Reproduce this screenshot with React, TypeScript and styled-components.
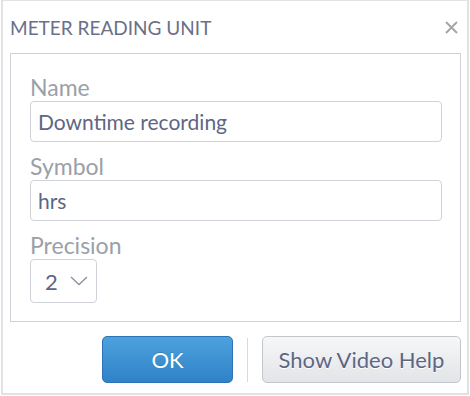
import React from 'react';
import styled, { createGlobalStyle } from 'styled-components';

const GlobalStyle = createGlobalStyle`
  html, body {
    margin: 0;
    padding: 0;
    background: #ffffff;
  }
  body {
    font-family: Lato, "Open Sans", "Liberation Sans", sans-serif;
  }
`;

const Dialog = styled.div`
  box-sizing: border-box;
  margin-left: 1px;
  width: 468px;
  height: 395px;
  border: 2px solid #e2e2e2;
  border-top-width: 1px;
  background: #fff;
  display: flex;
  flex-direction: column;
`;

const Header = styled.div`
  display: flex;
  align-items: center;
  justify-content: space-between;
  height: 52px;
  padding: 0 6px 0 7px;
`;

const Title = styled.h2`
  margin: 0;
  font-size: 19px;
  font-weight: 400;
  color: #6a7089;
`;

const CloseButton = styled.button`
  border: none;
  background: none;
  padding: 0;
  width: 20px;
  height: 20px;
  display: flex;
  align-items: center;
  justify-content: center;
  cursor: pointer;
`;

const FieldSet = styled.div`
  box-sizing: border-box;
  margin: 0 6px 0 7px;
  height: 269px;
  border: 1px solid #cdd1d8;
  padding: 20px 19px 0 19px;
  display: flex;
  flex-direction: column;
`;

const Field = styled.div`
  display: flex;
  flex-direction: column;
  margin-bottom: 11px;
`;

const Label = styled.label`
  font-size: 23px;
  line-height: 27px;
  color: #9aa0a8;
`;

const TextInput = styled.input`
  box-sizing: border-box;
  width: 412px;
  height: 41px;
  border: 1px solid #cfd3d9;
  border-radius: 4px;
  padding: 0 7px;
  font-family: inherit;
  font-size: 21px;
  color: #5d6684;
  outline: none;
`;

const Select = styled.div`
  box-sizing: border-box;
  width: 67px;
  height: 44px;
  border: 1px solid #cfd3d9;
  border-radius: 4px;
  display: flex;
  align-items: center;
  gap: 12px;
  padding-left: 14px;
  font-size: 22px;
  color: #5d6684;
`;

const Footer = styled.div`
  display: flex;
  justify-content: flex-end;
  align-items: center;
  gap: 14px;
  padding: 14px 6px 0 0;
`;

const Button = styled.button<{ $primary?: boolean }>`
  box-sizing: border-box;
  height: 47px;
  border-radius: 5px;
  font-family: inherit;
  font-size: 22px;
  cursor: pointer;
  padding: 0;
  width: ${p => (p.$primary ? '131px' : '199px')};
  color: ${p => (p.$primary ? '#ffffff' : '#5d6684')};
  border: 1px solid ${p => (p.$primary ? '#2b73b6' : '#c3c7cc')};
  background: ${p =>
    p.$primary
      ? 'linear-gradient(#4da2dc, #2f82c8)'
      : 'linear-gradient(#f7f7f8, #e2e4e7)'};
  text-shadow: ${p => (p.$primary ? '0 -1px 0 rgba(0,0,0,0.15)' : '0 1px 0 #fff')};
`;

const Divider = styled.div`
  width: 1px;
  height: 44px;
  background: #d8dadd;
`;

const App = () => {
  return (
    <>
      <GlobalStyle />
      <Dialog>
        <Header>
          <Title>METER READING UNIT</Title>
          <CloseButton aria-label="close">
            <svg width="13" height="13" viewBox="0 0 13 13">
              <path d="M1 1 L12 12 M12 1 L1 12" stroke="#a3a3a3" strokeWidth="1.8" />
            </svg>
          </CloseButton>
        </Header>
        <FieldSet>
          <Field>
            <Label>Name</Label>
            <TextInput defaultValue="Downtime recording" />
          </Field>
          <Field>
            <Label>Symbol</Label>
            <TextInput defaultValue="hrs" />
          </Field>
          <Field>
            <Label>Precision</Label>
            <Select>
              <span>2</span>
              <svg width="18" height="10" viewBox="0 0 18 10">
                <path d="M1 1 L9 8.5 L17 1" fill="none" stroke="#8a90a0" strokeWidth="1.3" />
              </svg>
            </Select>
          </Field>
        </FieldSet>
        <Footer>
          <Button $primary>OK</Button>
          <Divider />
          <Button>Show Video Help</Button>
        </Footer>
      </Dialog>
    </>
  );
};

export default App;
